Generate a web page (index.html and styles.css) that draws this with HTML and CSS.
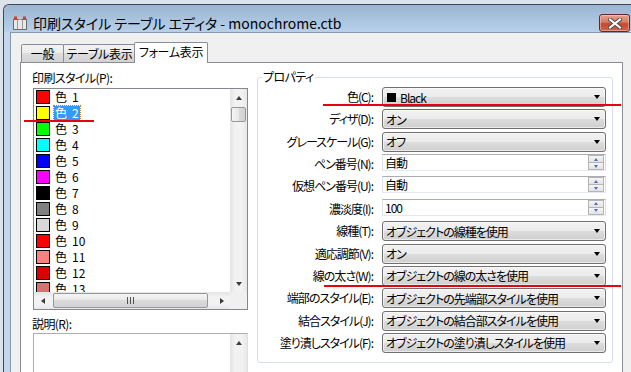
FILE: index.html
```html
<!DOCTYPE html>
<html>
<head>
 <meta charset="utf-8" />
 <title>印刷スタイル テーブル エディタ</title>
 <link rel="stylesheet" href="styles.css">
</head>
<body>
 <div class="window">
  <div class="titlebar">
   <svg class="appicon" width="14" height="14" viewBox="0 0 14 14">
    <rect x="0.5" y="3.5" width="13" height="10" fill="#e8e8e8" stroke="#6b6b6b" />
    <line x1="4.5" y1="4" x2="4.5" y2="13" stroke="#9a9a9a" />
    <line x1="9.5" y1="4" x2="9.5" y2="13" stroke="#9a9a9a" />
    <rect x="1" y="0.5" width="3" height="3" fill="#d23a2a" />
    <rect x="5.5" y="1.5" width="3" height="2" fill="#c8c8c8" />
    <rect x="10" y="0.5" width="3" height="3" fill="#d23a2a" />
   </svg>
   <span class="title">印刷スタイル テーブル エディタ - monochrome.ctb</span>
   <div class="closebtn">
    <svg width="14" height="11" viewBox="0 0 14 11">
     <path d="M2 1.5 L12 9.5 M12 1.5 L2 9.5" stroke="#4a4a4a" stroke-width="4" stroke-linecap="square" />
     <path d="M2 1.5 L12 9.5 M12 1.5 L2 9.5" stroke="#ffffff" stroke-width="2" stroke-linecap="square" />
    </svg>
   </div>
  </div>

  <div class="client">
   <div class="tabs">
    <div class="tab t1">一般</div>
    <div class="tab t2">テーブル表示</div>
    <div class="tab active">フォーム表示</div>
   </div>

   <div class="panel">
    <div class="leftcol">
     <div class="lbl">印刷スタイル(P):</div>
     <div class="listbox">
      <ul class="items">
       <li><span class="sw c1"></span><span class="nm">色</span><span class="no">1</span></li>
       <li><span class="sw c2"></span><span class="sel"><span class="nm">色</span><span class="no">2</span></span></li>
       <li><span class="sw c3"></span><span class="nm">色</span><span class="no">3</span></li>
       <li><span class="sw c4"></span><span class="nm">色</span><span class="no">4</span></li>
       <li><span class="sw c5"></span><span class="nm">色</span><span class="no">5</span></li>
       <li><span class="sw c6"></span><span class="nm">色</span><span class="no">6</span></li>
       <li><span class="sw c7"></span><span class="nm">色</span><span class="no">7</span></li>
       <li><span class="sw c8"></span><span class="nm">色</span><span class="no">8</span></li>
       <li><span class="sw c9"></span><span class="nm">色</span><span class="no">9</span></li>
       <li><span class="sw c10"></span><span class="nm">色</span><span class="no">10</span></li>
       <li><span class="sw c11"></span><span class="nm">色</span><span class="no">11</span></li>
       <li><span class="sw c12"></span><span class="nm">色</span><span class="no">12</span></li>
       <li><span class="sw c13"></span><span class="nm">色</span><span class="no">13</span></li>
      </ul>
      <div class="vscroll">
       <div class="sbtn"><i class="ar-up"></i></div>
       <div class="thumb-v"></div>
       <div class="sbtn end"><i class="ar-down"></i></div>
      </div>
      <div class="hscroll">
       <div class="sbtn-h"><i class="ar-left"></i></div>
       <div class="thumb-h"><i class="grip"></i></div>
       <div class="sbtn-h end"><i class="ar-right"></i></div>
      </div>
      <div class="corner"></div>
     </div>

     <div class="lbl desc-lbl">説明(R):</div>
     <div class="descbox">
      <div class="desc-text"></div>
      <div class="vscroll">
       <div class="sbtn"><i class="ar-up"></i></div>
      </div>
     </div>
    </div>

    <fieldset class="group">
     <legend>プロパティ</legend>
     <div class="props">
      <label>色(C):</label>
      <div class="combo"><span class="blk"></span>Black<i class="arrow"></i></div>
      <label>ディザ(D):</label>
      <div class="combo">オン<i class="arrow"></i></div>
      <label>グレースケール(G):</label>
      <div class="combo">オフ<i class="arrow"></i></div>
      <label>ペン番号(N):</label>
      <div class="spin">自動<div class="spinbtn"><span><i class="sp-up"></i></span><span><i class="sp-down"></i></span></div></div>
      <label>仮想ペン番号(U):</label>
      <div class="spin">自動<div class="spinbtn"><span><i class="sp-up"></i></span><span><i class="sp-down"></i></span></div></div>
      <label>濃淡度(I):</label>
      <div class="spin">100<div class="spinbtn"><span><i class="sp-up"></i></span><span><i class="sp-down"></i></span></div></div>
      <label>線種(T):</label>
      <div class="combo">オブジェクトの線種を使用<i class="arrow"></i></div>
      <label>適応調節(V):</label>
      <div class="combo">オン<i class="arrow"></i></div>
      <label>線の太さ(W):</label>
      <div class="combo">オブジェクトの線の太さを使用<i class="arrow"></i></div>
      <label>端部のスタイル(E):</label>
      <div class="combo">オブジェクトの先端部スタイルを使用<i class="arrow"></i></div>
      <label>結合スタイル(J):</label>
      <div class="combo">オブジェクトの結合部スタイルを使用<i class="arrow"></i></div>
      <label>塗り潰しスタイル(F):</label>
      <div class="combo">オブジェクトの塗り潰しスタイルを使用<i class="arrow"></i></div>
     </div>
    </fieldset>
   </div>
  </div>
 </div>

 <!-- red marker lines drawn over the dialog -->
 <div class="mark m1"></div>
 <div class="mark m2"></div>
 <div class="mark m3"></div>
</body>
</html>
```

FILE: styles.css
```css
* {
 box-sizing: border-box;
}
body {
 margin: 0;
 width: 631px;
 height: 372px;
 overflow: hidden;
 position: relative;
 background: #dde3ea;
 font-family: "Noto Sans CJK JP", "Noto Sans", sans-serif;
 font-size: 12px;
 font-feature-settings: "palt";
 color: #000;
}

/* window frame */
.window {
 margin: 4px 0 0 3px;
 width: 628px;
 height: 368px;
 overflow: hidden;
 border-top: 1px solid #3d4956;
 border-left: 1px solid #3d4956;
 border-radius: 6px 0 0 0;
 background: #c2d7ec;
 display: flex;
 flex-direction: column;
}
.titlebar {
 height: 27px;
 flex-shrink: 0;
 display: flex;
 align-items: center;
 padding-top: 9px;
 border-radius: 5px 0 0 0;
 background: linear-gradient(#9ab5d3, #b8d0e9);
}
.appicon {
 flex-shrink: 0;
 margin-left: 9px;
}
.title {
 margin-left: 6px;
 font-size: 14px;
 line-height: 18px;
 white-space: nowrap;
}
.closebtn {
 flex-shrink: 0;
 margin-left: auto;
 margin-right: 1px;
 width: 31px;
 height: 18px;
 border: 1px solid #5e2a26;
 border-radius: 3px;
 background: linear-gradient(#e6a391, #d47a62 45%, #c5482f 55%, #d0664a);
 box-shadow: inset 0 0 0 1px rgba(255, 220, 210, 0.45);
 display: flex;
 align-items: center;
 justify-content: center;
}

.client {
 flex: 1;
 min-height: 0;
 margin-left: 6px;
 border-left: 1px solid #8499b0;
 border-top: 1px solid #8499b0;
 background: #f0f0f0;
 padding: 9px 0 0 9px;
}

/* tabs */
.tabs {
 display: flex;
 align-items: flex-end;
 height: 20px;
 padding-left: 1px;
}
.tab {
 height: 18px;
 border: 1px solid #898c95;
 border-bottom: 0;
 border-radius: 2px 2px 0 0;
 background: linear-gradient(#f3f3f3, #ebebeb 50%, #dddddd 50%, #d3d3d3);
 text-align: center;
 line-height: 17px;
 letter-spacing: -0.3px;
 white-space: nowrap;
}
.t1 {
 width: 43px;
}
.t2 {
 width: 73px;
 margin-left: -1px;
}
.tab.active {
 position: relative;
 width: 74px;
 height: 21px;
 margin-left: -2px;
 margin-bottom: -1px;
 background: #fff;
 line-height: 18px;
}

.panel {
 width: 603px;
 height: 310px;
 border: 1px solid #898c95;
 border-bottom: 0;
 background: #fff;
 display: flex;
 align-items: flex-start;
 gap: 9px;
 padding: 7px 9px 0 12px;
}

/* left column: style list */
.leftcol {
 width: 215px;
 flex-shrink: 0;
}
.lbl {
 height: 15px;
 line-height: 15px;
 margin: 0 0 3px -1px;
 letter-spacing: -0.6px;
 white-space: nowrap;
}
.listbox {
 height: 222px;
 border: 1px solid #828790;
 display: grid;
 grid-template-columns: 196px 17px;
 grid-template-rows: 203px 17px;
}
.items {
 list-style: none;
 margin: 0;
 padding: 0 0 0 2px;
 overflow: hidden;
}
.items li {
 height: 16px;
 display: flex;
 align-items: center;
 line-height: 14px;
}
.sw {
 width: 14px;
 height: 14px;
 border: 1px solid #000;
 margin-right: 5px;
 flex-shrink: 0;
}
.no {
 margin-left: 5px;
}
.sel {
 display: flex;
 height: 14px;
 margin: -1px 0 0 -1px;
 padding: 0 1px;
 background: #3399ff;
 color: #fff;
 outline: 1px dotted #c8782a;
}
.c1 { background: #ff0000; }
.c2 { background: #ffff00; }
.c3 { background: #00ff00; }
.c4 { background: #00ffff; }
.c5 { background: #0000ff; }
.c6 { background: #ff00ff; }
.c7 { background: #000000; }
.c8 { background: #808080; }
.c9 { background: #d8d8d8; }
.c10 { background: #ff0000; }
.c11 { background: #ff8080; }
.c12 { background: #dd0000; }
.c13 { background: #dc7070; }

/* scrollbars */
.vscroll {
 display: flex;
 flex-direction: column;
 background: linear-gradient(to right, #e4e4e4, #f2f2f2 30%, #f2f2f2 70%, #e8e8e8);
}
.sbtn {
 height: 17px;
 display: flex;
 align-items: center;
 justify-content: center;
 flex-shrink: 0;
}
.sbtn.end {
 margin-top: auto;
}
.thumb-v {
 height: 15px;
 margin: 1px 1px 0 1px;
 border: 1px solid #979797;
 border-radius: 2px;
 background: linear-gradient(to right, #f5f5f5, #e8e8e8 50%, #dadada 50%, #d2d2d2);
}
.hscroll {
 display: flex;
 align-items: center;
 background: linear-gradient(#e4e4e4, #f2f2f2 30%, #f2f2f2 70%, #e8e8e8);
}
.sbtn-h {
 width: 17px;
 height: 17px;
 display: flex;
 align-items: center;
 justify-content: center;
 flex-shrink: 0;
}
.sbtn-h.end {
 margin-left: auto;
}
.thumb-h {
 width: 155px;
 height: 15px;
 margin-left: 2px;
 border: 1px solid #979797;
 border-radius: 2px;
 background: linear-gradient(#f5f5f5, #e8e8e8 50%, #dadada 50%, #d2d2d2);
 display: flex;
 align-items: center;
 justify-content: center;
}
.grip {
 width: 8px;
 height: 7px;
 background: linear-gradient(to right, #505050 1px, transparent 1px);
 background-size: 3px 7px;
}
.corner {
 background: #f0f0f0;
}
.ar-up,
.ar-down {
 width: 1px;
 height: 0;
 border-left: 3px solid transparent;
 border-right: 3px solid transparent;
}
.ar-up {
 border-bottom: 4px solid #3c3c3c;
}
.ar-down {
 border-top: 4px solid #3c3c3c;
}
.ar-left,
.ar-right {
 width: 0;
 height: 1px;
 border-top: 3px solid transparent;
 border-bottom: 3px solid transparent;
}
.ar-left {
 border-right: 4px solid #3c3c3c;
}
.ar-right {
 border-left: 4px solid #3c3c3c;
}

.desc-lbl {
 margin-top: 6px;
 margin-bottom: 2px;
}
.descbox {
 height: 39px;
 border: 1px solid #abadb3;
 border-right-color: #dbdfe6;
 border-bottom: 0;
 display: flex;
}
.desc-text {
 flex: 1;
}
.descbox .vscroll {
 width: 17px;
}

/* right column: property group */
.group {
 width: 356px;
 height: 293px;
 flex-shrink: 0;
 margin: 0;
 padding: 3px 6px 0 0;
 border: 1px solid #d5dfe5;
 border-radius: 3px;
}
.group legend {
 margin-left: 4px;
 padding: 0 1px;
 line-height: 14px;
 letter-spacing: -0.6px;
}
.props {
 display: grid;
 grid-template-columns: 115px 224px;
 grid-auto-rows: 20px;
 column-gap: 9px;
 row-gap: 2.36px;
 letter-spacing: -1px;
}
.props label {
 text-align: right;
 line-height: 20px;
 white-space: nowrap;
}
.combo {
 height: 20px;
 border: 1px solid #707070;
 border-radius: 3px;
 background: linear-gradient(#f2f2f2, #ebebeb 50%, #dddddd 50%, #cfcfcf);
 box-shadow: inset 0 0 0 1px rgba(255, 255, 255, 0.55);
 display: flex;
 align-items: center;
 padding: 0 5px 0 3px;
 white-space: nowrap;
}
.blk {
 width: 9px;
 height: 9px;
 margin: 0 4px 0 1px;
 background: #000;
}
.arrow {
 margin-left: auto;
 width: 1px;
 height: 0;
 border-left: 3px solid transparent;
 border-right: 3px solid transparent;
 border-top: 4px solid #000;
}
.spin {
 height: 17px;
 align-self: start;
 border: 1px solid;
 border-color: #abadb3 #dbdfe6 #e3e9ef #e2e3ea;
 background: #fff;
 display: flex;
 align-items: center;
 padding-left: 2px;
}
.spinbtn {
 margin-left: auto;
 margin-right: 1px;
 width: 16px;
 height: 15px;
 border: 1px solid #b4b4b4;
 display: flex;
 flex-direction: column;
}
.spinbtn span {
 flex: 1;
 display: flex;
 align-items: center;
 justify-content: center;
 background: linear-gradient(#f6f6f6, #e2e2e2);
}
.spinbtn span + span {
 border-top: 1px solid #b4b4b4;
}
.sp-up,
.sp-down {
 width: 1px;
 height: 0;
 border-left: 2px solid transparent;
 border-right: 2px solid transparent;
}
.sp-up {
 border-bottom: 3px solid #4b6fb8;
}
.sp-down {
 border-top: 3px solid #4b6fb8;
}

/* red marker lines */
.mark {
 position: absolute;
 height: 2px;
 background: #e60012;
}
.m1 {
 left: 24px;
 top: 120px;
 width: 70px;
}
.m2 {
 left: 323px;
 top: 104px;
 width: 298px;
}
.m3 {
 left: 324px;
 top: 285px;
 width: 297px;
}
```
